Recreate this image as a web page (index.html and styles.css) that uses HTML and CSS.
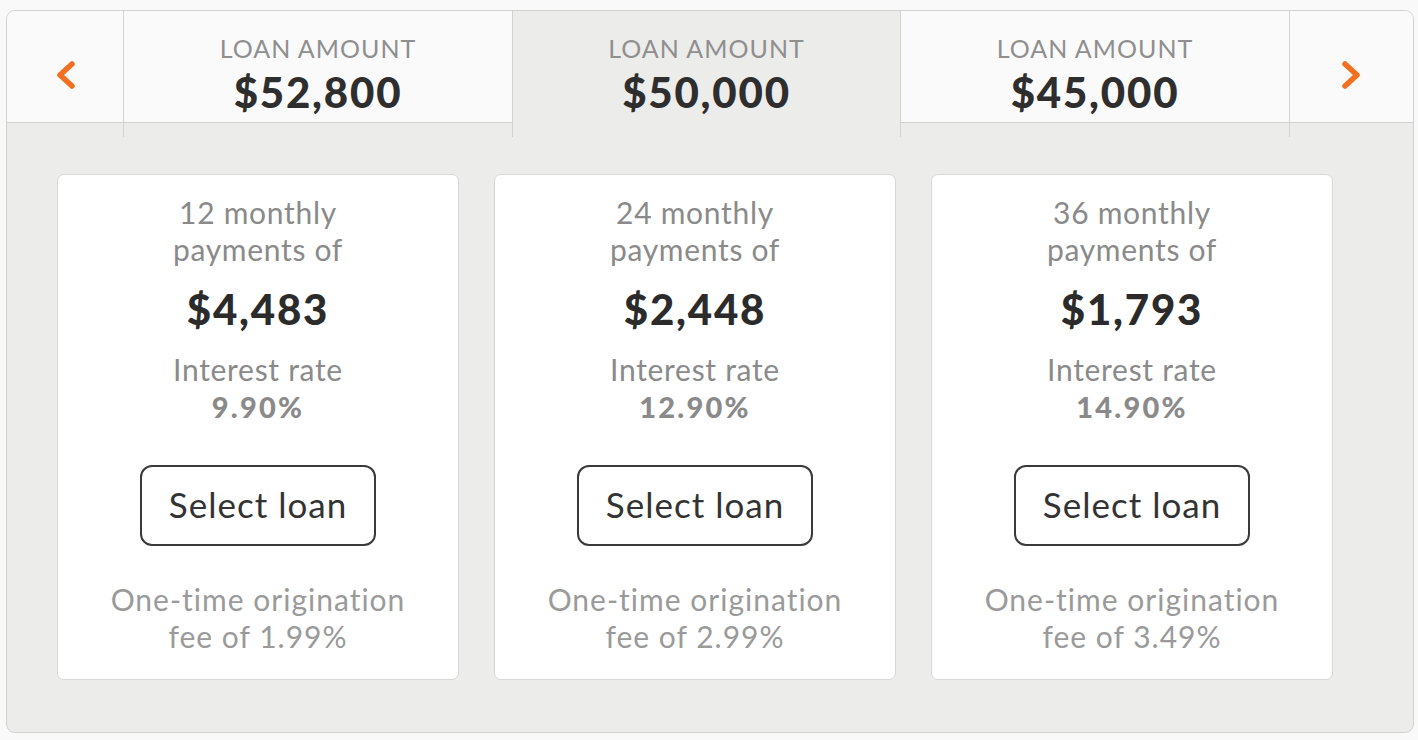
FILE: index.html
```html
<!DOCTYPE html>
<html>
<head>
<meta charset="utf-8">
<link rel="stylesheet" href="styles.css">
</head>
<body>
<div class="widget">
  <div class="tabs">
    <div class="cell nav nav-left">
      <div class="inner">
        <svg width="24" height="32" viewBox="0 0 24 32"><polyline points="19,5 7,16 19,27" fill="none" stroke="#f37021" stroke-width="5.5" stroke-linecap="round" stroke-linejoin="round"/></svg>
      </div>
    </div>
    <div class="cell tab">
      <div class="inner">
        <div class="tab-label">LOAN AMOUNT</div>
        <div class="tab-value">$52,800</div>
      </div>
    </div>
    <div class="cell tab active">
      <div class="inner">
        <div class="tab-label">LOAN AMOUNT</div>
        <div class="tab-value">$50,000</div>
      </div>
    </div>
    <div class="cell tab">
      <div class="inner">
        <div class="tab-label">LOAN AMOUNT</div>
        <div class="tab-value">$45,000</div>
      </div>
    </div>
    <div class="cell nav nav-right">
      <div class="inner">
        <svg width="24" height="32" viewBox="0 0 24 32"><polyline points="5,5 17,16 5,27" fill="none" stroke="#f37021" stroke-width="5.5" stroke-linecap="round" stroke-linejoin="round"/></svg>
      </div>
    </div>
  </div>
  <div class="cards">
    <div class="card">
      <div class="term">12 monthly<br>payments of</div>
      <div class="payment">$4,483</div>
      <div class="rate-label">Interest rate</div>
      <div class="rate">9.90%</div>
      <button class="select">Select loan</button>
      <div class="fee">One-time origination<br>fee of 1.99%</div>
    </div>
    <div class="card">
      <div class="term">24 monthly<br>payments of</div>
      <div class="payment">$2,448</div>
      <div class="rate-label">Interest rate</div>
      <div class="rate">12.90%</div>
      <button class="select">Select loan</button>
      <div class="fee">One-time origination<br>fee of 2.99%</div>
    </div>
    <div class="card">
      <div class="term">36 monthly<br>payments of</div>
      <div class="payment">$1,793</div>
      <div class="rate-label">Interest rate</div>
      <div class="rate">14.90%</div>
      <button class="select">Select loan</button>
      <div class="fee">One-time origination<br>fee of 3.49%</div>
    </div>
  </div>
</div>
</body>
</html>
```

FILE: styles.css
```css
* { box-sizing: border-box; }
html, body { margin: 0; padding: 0; }
body {
  background: #f9f9f9;
  font-family: Lato, "Open Sans", sans-serif;
  padding: 10px 0 0 6px;
}
.widget {
  width: 1408px;
  height: 723px;
  border: 1px solid #d2d2d2;
  border-radius: 9px;
  background: #ececeb;
  overflow: hidden;
}
.tabs {
  display: grid;
  grid-template-columns: 116px 389px 388px 389px 124px;
}
.cell {
  display: flex;
  flex-direction: column;
  padding-bottom: 14px;
}
.cell + .cell { border-left: 1px solid #d2d2d2; }
.inner {
  height: 112px;
  background: #fafafa;
  border-bottom: 1px solid #d2d2d2;
  display: flex;
  flex-direction: column;
  align-items: center;
}
.nav .inner { justify-content: center; padding-top: 17px; }
.active .inner { background: transparent; border-bottom-color: transparent; }
.tab .inner { padding-top: 22px; }
.tab-label {
  font-size: 25px;
  line-height: 30px;
  color: #8f8f8f;
  letter-spacing: 1px;
}
.tab-value {
  font-size: 42px;
  line-height: 50px;
  font-weight: 900;
  color: #2e2e2e;
  letter-spacing: 1.8px;
  margin-top: 4px;
}
.cards {
  display: flex;
  gap: 35px;
  padding: 37px 0 0 50px;
}
.card {
  width: 402px;
  height: 506px;
  background: #fff;
  border: 1px solid #d8d8d8;
  border-radius: 7px;
  display: flex;
  flex-direction: column;
  align-items: center;
  text-align: center;
  padding-top: 19px;
}
.term, .rate-label, .fee {
  font-size: 30px;
  line-height: 37px;
  color: #8a8a8a;
  letter-spacing: 0.7px;
}
.fee { letter-spacing: 1px; }
.payment {
  font-size: 42px;
  line-height: 50px;
  font-weight: 900;
  color: #2b2b2b;
  letter-spacing: 1.8px;
  margin-top: 16px;
}
.rate-label { margin-top: 17px; }
.rate {
  font-size: 29px;
  line-height: 37px;
  font-weight: 900;
  color: #8a8a8a;
  letter-spacing: 2.2px;
}
.select {
  margin-top: 40px;
  width: 236px;
  height: 81px;
  border: 2px solid #3a3a3a;
  border-radius: 12px;
  background: #fff;
  font-family: Lato, "Open Sans", sans-serif;
  font-size: 35px;
  letter-spacing: 1px;
  color: #333;
  padding: 0 0 4px;
}
.fee {
  margin-top: 35px;
  color: #9a9a9a;
}
```
